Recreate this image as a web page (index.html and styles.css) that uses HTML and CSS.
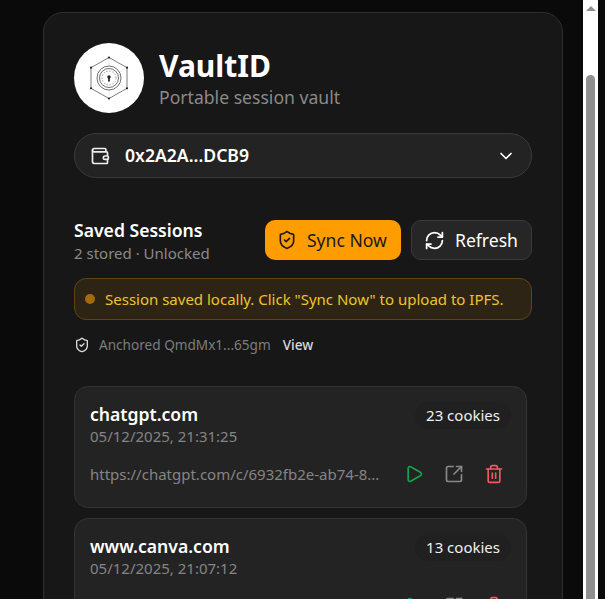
FILE: index.html
```html
<!DOCTYPE html>
<html lang="en">
<head>
    <meta charset="UTF-8">
    <meta name="viewport" content="width=device-width, initial-scale=1.0">
    <title>VaultID</title>
    <link rel="stylesheet" href="styles.css">
</head>
<body>
    <div class="page">
        <main class="view">
            <div class="panel">
                <!-- Brand -->
                <header class="brand">
                    <div class="logo">
                        <svg width="50" height="50" viewBox="0 0 50 50" fill="none" stroke="#333" stroke-width="0.7">
                            <path d="M25 4.5 7 14.7 7 35.3 25 45.5 43 35.3 43 14.7Z" stroke="#444"/>
                            <path d="M25 4.5V13M7 14.7 14.5 19M43 14.7 35.5 19M7 35.3 14.5 31M43 35.3 35.5 31M25 45.5V37" stroke="#e4e4e4"/>
                            <circle cx="25" cy="25" r="12"/>
                            <circle cx="25" cy="25" r="9.5"/>
                            <circle cx="25" cy="25" r="7" stroke="#777" stroke-dasharray="1.5 1.5"/>
                            <circle cx="25" cy="24" r="1.7" fill="#222" stroke="none"/>
                            <path d="M24.3 24.5h1.4l.3 4h-2z" fill="#222" stroke="none"/>
                            <g fill="#222" stroke="none">
                                <circle cx="25" cy="4.5" r="1.1"/><circle cx="7" cy="14.7" r="1.1"/><circle cx="43" cy="14.7" r="1.1"/>
                                <circle cx="7" cy="35.3" r="1.1"/><circle cx="43" cy="35.3" r="1.1"/><circle cx="25" cy="45.5" r="1.1"/>
                            </g>
                        </svg>
                    </div>
                    <div>
                        <h1 class="brand-name">VaultID</h1>
                        <p class="brand-tag">Portable session vault</p>
                    </div>
                </header>

                <!-- Wallet -->
                <div class="wallet">
                    <svg class="wallet-icon" width="20" height="20" viewBox="0 0 24 24" fill="none" stroke="#eee" stroke-width="2" stroke-linecap="round" stroke-linejoin="round">
                        <path d="M19 7V4a1 1 0 0 0-1-1H5a2 2 0 0 0 0 4h15a1 1 0 0 1 1 1v4h-3a2 2 0 0 0 0 4h3a1 1 0 0 0 1-1v-2a1 1 0 0 0-1-1"/>
                        <path d="M3 5v14a2 2 0 0 0 2 2h15a1 1 0 0 0 1-1v-4"/>
                    </svg>
                    <span class="wallet-addr">0x2A2A...DCB9</span>
                    <svg width="20" height="20" viewBox="0 0 24 24" fill="none" stroke="#fff" stroke-width="2" stroke-linecap="round" stroke-linejoin="round">
                        <path d="m6 9 6 6 6-6"/>
                    </svg>
                </div>

                <!-- Saved sessions header -->
                <section class="saved-head">
                    <div>
                        <h2 class="saved-title">Saved Sessions</h2>
                        <p class="saved-sub">2 stored · Unlocked</p>
                    </div>
                    <div class="saved-actions">
                        <button class="button button-sync">
                            <svg width="20" height="20" viewBox="0 0 24 24" fill="none" stroke="currentColor" stroke-width="2" stroke-linecap="round" stroke-linejoin="round">
                                <path d="M20 13c0 5-3.5 7.5-7.66 8.95a1 1 0 0 1-.67-.01C7.5 20.5 4 18 4 13V6a1 1 0 0 1 1-1c2 0 4.5-1.2 6.24-2.72a1.17 1.17 0 0 1 1.52 0C14.51 3.81 17 5 19 5a1 1 0 0 1 1 1z"/>
                                <path d="m9 12 2 2 4-4"/>
                            </svg>
                            Sync Now
                        </button>
                        <button class="button button-refresh">
                            <svg width="21" height="21" viewBox="0 0 24 24" fill="none" stroke="currentColor" stroke-width="2" stroke-linecap="round" stroke-linejoin="round">
                                <path d="M3 12a9 9 0 0 1 9-9 9.75 9.75 0 0 1 6.74 2.74L21 8"/>
                                <path d="M21 3v5h-5"/>
                                <path d="M21 12a9 9 0 0 1-9 9 9.75 9.75 0 0 1-6.74-2.74L3 16"/>
                                <path d="M8 16H3v5"/>
                            </svg>
                            Refresh
                        </button>
                    </div>
                </section>

                <div class="notice">
                    <span class="notice-dot"></span>
                    <span>Session saved locally. Click "Sync Now" to upload to IPFS.</span>
                </div>

                <div class="anchor">
                    <svg width="16" height="16" viewBox="0 0 24 24" fill="none" stroke="#ddd" stroke-width="2" stroke-linecap="round" stroke-linejoin="round">
                        <path d="M20 13c0 5-3.5 7.5-7.66 8.95a1 1 0 0 1-.67-.01C7.5 20.5 4 18 4 13V6a1 1 0 0 1 1-1c2 0 4.5-1.2 6.24-2.72a1.17 1.17 0 0 1 1.52 0C14.51 3.81 17 5 19 5a1 1 0 0 1 1 1z"/>
                        <path d="m9 12 2 2 4-4"/>
                    </svg>
                    <span class="anchor-text">Anchored QmdMx1...65gm</span>
                    <span class="anchor-link">View</span>
                </div>

                <!-- Session list -->
                <div class="sessions">
                    <article class="session">
                        <div class="session-top">
                            <div>
                                <h3 class="session-host">chatgpt.com</h3>
                                <p class="session-date">05/12/2025, 21:31:25</p>
                            </div>
                            <span class="session-count">23 cookies</span>
                        </div>
                        <div class="session-bottom">
                            <span class="session-url">https://chatgpt.com/c/6932fb2e-ab74-8...</span>
                            <div class="session-actions">
                                <svg width="20" height="20" viewBox="0 0 24 24" fill="none" stroke="#16a34a" stroke-width="2" stroke-linecap="round" stroke-linejoin="round">
                                    <path d="M5 5a2 2 0 0 1 3-1.7l12 7a2 2 0 0 1 0 3.4l-12 7A2 2 0 0 1 5 19z"/>
                                </svg>
                                <svg width="20" height="20" viewBox="0 0 24 24" fill="none" stroke="#8a8a8a" stroke-width="2" stroke-linecap="round" stroke-linejoin="round">
                                    <path d="M21 13v6a2 2 0 0 1-2 2H5a2 2 0 0 1-2-2V5a2 2 0 0 1 2-2h6"/>
                                    <path d="m21 3-9 9"/>
                                    <path d="M15 3h6v6"/>
                                </svg>
                                <svg width="20" height="20" viewBox="0 0 24 24" fill="none" stroke="#ef5a5f" stroke-width="2" stroke-linecap="round" stroke-linejoin="round">
                                    <path d="M3 6h18"/>
                                    <path d="M19 6v14a2 2 0 0 1-2 2H7a2 2 0 0 1-2-2V6"/>
                                    <path d="M8 6V4a2 2 0 0 1 2-2h4a2 2 0 0 1 2 2v2"/>
                                    <path d="M10 11v6M14 11v6"/>
                                </svg>
                            </div>
                        </div>
                    </article>
                    <article class="session">
                        <div class="session-top">
                            <div>
                                <h3 class="session-host">www.canva.com</h3>
                                <p class="session-date">05/12/2025, 21:07:12</p>
                            </div>
                            <span class="session-count">13 cookies</span>
                        </div>
                        <div class="session-bottom">
                            <span class="session-url"></span>
                            <div class="session-actions">
                                <svg width="20" height="20" viewBox="0 0 24 24" fill="none" stroke="#16a34a" stroke-width="2" stroke-linecap="round" stroke-linejoin="round">
                                    <path d="M5 5a2 2 0 0 1 3-1.7l12 7a2 2 0 0 1 0 3.4l-12 7A2 2 0 0 1 5 19z"/>
                                </svg>
                                <svg width="20" height="20" viewBox="0 0 24 24" fill="none" stroke="#8a8a8a" stroke-width="2" stroke-linecap="round" stroke-linejoin="round">
                                    <path d="M21 13v6a2 2 0 0 1-2 2H5a2 2 0 0 1-2-2V5a2 2 0 0 1 2-2h6"/>
                                    <path d="m21 3-9 9"/>
                                    <path d="M15 3h6v6"/>
                                </svg>
                                <svg width="20" height="20" viewBox="0 0 24 24" fill="none" stroke="#ef5a5f" stroke-width="2" stroke-linecap="round" stroke-linejoin="round">
                                    <path d="M3 6h18"/>
                                    <path d="M19 6v14a2 2 0 0 1-2 2H7a2 2 0 0 1-2-2V6"/>
                                    <path d="M8 6V4a2 2 0 0 1 2-2h4a2 2 0 0 1 2 2v2"/>
                                    <path d="M10 11v6M14 11v6"/>
                                </svg>
                            </div>
                        </div>
                    </article>
                </div>
            </div>
        </main>

        <!-- Scrollbar, drawn because it is part of the picture -->
        <div class="scrollbar">
            <span class="scrollbar-arrow"></span>
            <span class="scrollbar-thumb"></span>
        </div>
    </div>
</body>
</html>
```

FILE: styles.css
```css
* {
    margin: 0;
    padding: 0;
    box-sizing: border-box;
    font-family: 'Noto Sans', sans-serif;
}

html, body {
    height: 100%;
    overflow: hidden;
}

body {
    background-color: #0a0a0a;
    color: #ffffff;
}

.page {
    display: flex;
    height: 599px;
    width: 605px;
    padding-right: 7px;
}

.view {
    flex: 1;
    overflow: hidden;
    padding: 12px 20px 0 43px;
}

.panel {
    background: #171717;
    border: 1px solid #2e2e2e;
    border-radius: 20px;
    padding: 30px;
    height: 700px;
}

.brand {
    display: flex;
    align-items: center;
    gap: 15px;
    margin-bottom: 20px;
}

.logo {
    width: 70px;
    height: 70px;
    border-radius: 50%;
    background: #ffffff;
    display: flex;
    align-items: center;
    justify-content: center;
}

.brand-name {
    font-size: 30px;
    font-weight: 700;
    line-height: 38px;
}

.brand-tag {
    font-size: 17.6px;
    line-height: 24px;
    color: #8a8a8a;
}

.wallet {
    display: flex;
    align-items: center;
    height: 45px;
    padding: 0 15px;
    background: #232323;
    border: 1px solid #3a3a3a;
    border-radius: 22px;
    margin-bottom: 39px;
}

.wallet-icon {
    margin-right: 15px;
}

.wallet-addr {
    flex: 1;
    font-size: 17.6px;
    font-weight: 600;
    padding-bottom: 2px;
}

.saved-head {
    display: flex;
    justify-content: space-between;
    align-items: flex-start;
    margin-bottom: 15px;
}

.saved-title {
    font-size: 17.6px;
    font-weight: 600;
    line-height: 26px;
}

.saved-sub {
    font-size: 15px;
    line-height: 20px;
    color: #8a8a8a;
}

.saved-actions {
    display: flex;
    gap: 10px;
    margin-top: 3px;
}

.button {
    display: flex;
    align-items: center;
    gap: 10px;
    height: 40px;
    padding: 0 13px 0 11px;
    font-size: 17.6px;
    border-radius: 10px;
    border: 1px solid transparent;
}

.button-sync {
    background: #ff9d00;
    color: #1a1a1a;
}

.button-refresh {
    background: #262626;
    border-color: #3a3a3a;
    color: #ffffff;
    padding-left: 12px;
}

.notice {
    display: flex;
    align-items: center;
    gap: 10px;
    height: 42px;
    padding: 0 10px;
    background: #2e2416;
    border: 1px solid #5e4315;
    border-radius: 12px;
    font-size: 15px;
    color: #eec42a;
    margin-bottom: 16px;
}

.notice-dot {
    width: 10px;
    height: 10px;
    border-radius: 50%;
    background: #a5690e;
}

.anchor {
    display: flex;
    align-items: center;
    height: 18px;
    font-size: 13.6px;
    margin-bottom: 32px;
}

.anchor svg {
    margin-right: 9px;
}

.anchor-text {
    color: #7d7d7d;
    margin-right: 12px;
    padding-bottom: 2px;
}

.anchor-link {
    color: #d8d8d8;
    font-weight: 500;
    padding-bottom: 2px;
}

.sessions {
    display: flex;
    flex-direction: column;
    gap: 10px;
    padding-right: 5px;
}

.session {
    background: #232323;
    border: 1px solid #333333;
    border-radius: 14px;
    padding: 15px;
    height: 122px;
}

.session-top {
    display: flex;
    justify-content: space-between;
    align-items: flex-start;
    margin-bottom: 17px;
}

.session-host {
    font-size: 17.6px;
    font-weight: 600;
    line-height: 24px;
}

.session-date {
    font-size: 15px;
    line-height: 21px;
    color: #858585;
}

.session-count {
    font-size: 15px;
    line-height: 21px;
    padding: 3px 11px;
    border-radius: 14px;
    background: #202020;
    color: #f0f0f0;
}

.session-bottom {
    display: flex;
    justify-content: space-between;
    align-items: center;
}

.session-url {
    font-size: 15px;
    color: #858585;
}

.session-actions {
    display: flex;
    gap: 20px;
    padding-right: 7px;
}

.scrollbar {
    width: 15px;
    background: #ffffff;
    display: flex;
    flex-direction: column;
    align-items: center;
    padding-top: 6px;
}

.scrollbar-arrow {
    width: 0;
    height: 0;
    border-left: 5px solid transparent;
    border-right: 5px solid transparent;
    border-bottom: 5px solid #8f8f8f;
    margin-bottom: 64px;
}

.scrollbar-thumb {
    flex: 1;
    width: 9px;
    background: #8f8f8f;
    border-radius: 5px 5px 0 0;
}
```
